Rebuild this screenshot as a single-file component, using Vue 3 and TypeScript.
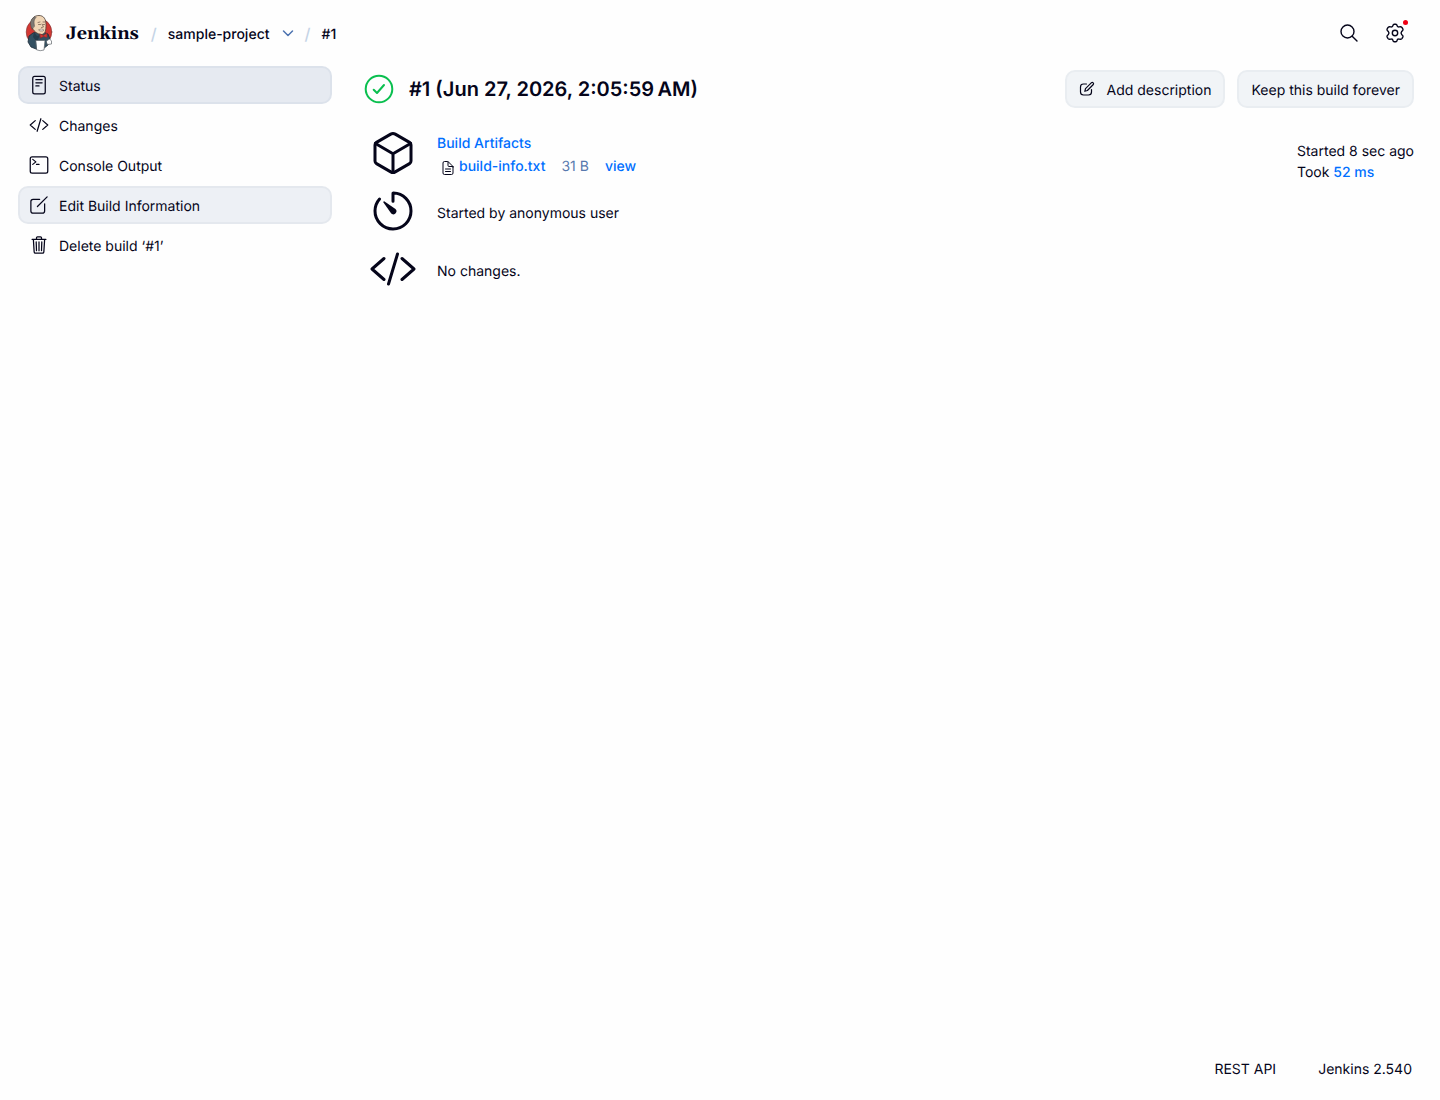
<script setup lang="ts">
interface Task {
  label: string
  icon: string
  state?: 'active' | 'hover'
}

const tasks: Task[] = [
  { label: 'Status', icon: 'status', state: 'active' },
  { label: 'Changes', icon: 'code' },
  { label: 'Console Output', icon: 'terminal' },
  { label: 'Edit Build Information', icon: 'edit', state: 'hover' },
  { label: 'Delete build ‘#1’', icon: 'trash' },
]

const icons: Record<string, string[]> = {
  status: [
    'M144 32h224a48 48 0 0148 48v352a48 48 0 01-48 48H144a48 48 0 01-48-48V80a48 48 0 0148-48z',
    'M176 120h160M176 200h160M176 280h80',
  ],
  code: ['M160 368L32 256l128-112M352 368l128-112-128-112M304 96l-96 320'],
  terminal: [
    'M80 48h352a48 48 0 0148 48v320a48 48 0 01-48 48H80a48 48 0 01-48-48V96a48 48 0 0148-48z',
    'M96 112l80 64-80 64M192 240h64',
  ],
  edit: [
    'M400 224v184a56 56 0 01-56 56H104a56 56 0 01-56-56V168a56 56 0 0156-56h167',
    'M216 296L464 48',
  ],
  trash: [
    'M112 112l20 320c.95 18.49 14.4 32 32 32h184c17.67 0 30.87-13.51 32-32l20-320M80 112h352',
    'M192 112V72a24 24 0 0124-24h80a24 24 0 0124 24v40M256 176v224M184 176l8 224M328 176l-8 224',
  ],
}
</script>

<template>
  <div class="page">
    <header class="header">
      <a class="brand" href="#">
        <svg class="logo" viewBox="0 0 28 38" aria-hidden="true">
          <ellipse cx="14" cy="18" rx="12.800" ry="13.500" fill="#d33833" stroke="#7a3230" stroke-width=".6" />
          <path d="M8 19l-4 3-1 6 3 5 5 2h7l5-4 2-6-2-5-5-2z" fill="#335061" stroke="#1d2c38" stroke-width=".8" />
          <path d="M6.500 12C5 5 9 1.500 14 1.500c5 0 7 4 7 9 0 6-.5 9-4 10-5 0-9-4-10.500-8z" fill="#f0d6b7" stroke="#4b3d35" stroke-width=".8" />
          <path d="M7 15C4.500 10 5 5 10 2.500l1 1C8.500 6 9 9 9.500 12z" fill="#7d7974" stroke="#4b4541" stroke-width=".5" />
          <path d="M13 8.500l2-.5M18 8h2M13.500 10.500h2M18 10.500h1.500M17 10l1.500 3-2 .5" fill="none" stroke="#6b5548" stroke-width=".7" />
          <path d="M14 15.500q3-1.500 5 .5l-1 1h-3z" fill="#e9e3dc" stroke="#6b5548" stroke-width=".5" />
          <path d="M9 18l3 4 3-1-3 7-4-5z" fill="#263c4b" />
          <path d="M15 20l3.500 1.500L22 19v4.500l-3.500-1L15.500 24z" fill="#d33833" stroke="#8d2425" stroke-width=".6" />
          <path d="M11 26.500h9L19 36q-4 1.500-7 0z" fill="#fff" stroke="#60656b" stroke-width=".7" />
          <path d="M21.500 27l3-2 2 2v3l-4 .5z" fill="#fff" stroke="#60656b" stroke-width=".7" />
        </svg>
        <span>Jenkins</span>
      </a>
      <nav class="crumbs" aria-label="Breadcrumb">
        <span class="slash">/</span>
        <a href="#">sample-project</a>
        <button class="chevron" type="button" aria-label="Project menu">
          <svg viewBox="0 0 12 12"><path d="M1.500 4L6 8.500 10.500 4" /></svg>
        </button>
        <span class="slash">/</span>
        <a href="#">#1</a>
      </nav>
      <div class="tools">
        <button type="button" aria-label="Search">
          <svg class="icon tool" viewBox="0 0 20 20">
            <circle cx="8.500" cy="8.500" r="6.500" /><path d="M13.200 13.200L18 18" />
          </svg>
        </button>
        <button type="button" aria-label="Manage">
          <svg class="icon tool" viewBox="0 0 20 20">
            <path d="M8 2.400Q8.200 1.300 9.200 1.300H10.800Q11.800 1.300 12 2.400Q12.300 4.100 13.800 3.900L15.700 3.800Q16.600 3.900 17.100 4.700L17.900 6.100Q18.300 7 17.500 7.700L16.600 8.600Q15.500 10 16.600 11.400L17.500 12.300Q18.300 13 17.900 13.900L17.100 15.300Q16.600 16.100 15.700 16.200L13.800 16.100Q12.300 15.900 12 17.600Q11.800 18.700 10.800 18.700H9.200Q8.200 18.700 8 17.600Q7.700 15.900 6.200 16.100L4.300 16.200Q3.400 16.100 2.900 15.300L2.100 13.900Q1.700 13 2.500 12.300L3.400 11.400Q4.500 10 3.400 8.600L2.500 7.700Q1.700 7 2.100 6.100L2.900 4.700Q3.400 3.900 4.300 3.800L6.200 3.900Q7.700 4.100 8 2.400z" />
            <circle cx="10" cy="10" r="2.700" />
          </svg>
          <span class="dot"></span>
        </button>
      </div>
    </header>

    <div class="body">
      <nav class="side" aria-label="Build">
        <a v-for="task in tasks" :key="task.label" href="#" class="task" :class="task.state">
          <svg class="icon" viewBox="0 0 512 512">
            <path v-for="d in icons[task.icon]" :key="d" :d="d" />
          </svg>
          <span>{{ task.label }}</span>
        </a>
      </nav>

      <main class="main">
        <div class="bar">
          <svg class="ok" viewBox="0 0 30 30" aria-label="Success">
            <circle cx="15" cy="15" r="13.300" /><path d="M9.700 15.700l3.300 3.300 7-8" />
          </svg>
          <h1>#1 (Jun 27, 2026, 2:05:59&#8239;AM)</h1>
          <div class="actions">
            <button class="btn" type="button">
              <svg class="pen" viewBox="0 0 16 16">
                <path d="M7.500 3H4.500Q1.500 3 1.500 6v5q0 3 3 3h5q3 0 3-3V8.500" />
                <path d="M5.800 10.300L6.500 7.700 12.500 1.700Q13.400 1 14.200 1.800T14.300 3.500L8.400 9.500z" />
              </svg>
              Add description
            </button>
            <button class="btn" type="button">Keep this build forever</button>
          </div>
        </div>

        <div class="content">
          <div class="rows">
            <section class="row">
              <svg class="icon big" viewBox="0 0 512 512">
                <path d="M448 341.370V170.610A32 32 0 00432.110 143l-152-88.460a47.940 47.940 0 00-48.240 0L79.890 143A32 32 0 0064 170.610v170.760A32 32 0 0079.890 369l152 88.460a48 48 0 0048.240 0l152-88.460A32 32 0 00448 341.370z" />
                <path d="M69 154l187 110 187-110M256 464V264" />
              </svg>
              <div class="artifacts">
                <a href="#">Build Artifacts</a>
                <div class="file">
                  <svg class="icon doc" viewBox="0 0 512 512">
                    <path d="M416 221.250V416a48 48 0 01-48 48H144a48 48 0 01-48-48V96a48 48 0 0148-48h98.750a32 32 0 0122.620 9.370l141.260 141.260a32 32 0 019.370 22.620z" />
                    <path d="M256 56v120a32 32 0 0032 32h120M176 288h160M176 368h160" />
                  </svg>
                  <a href="#">build-info.txt</a>
                  <span class="size">31 B</span>
                  <a href="#">view</a>
                </div>
              </div>
            </section>
            <section class="row">
              <svg class="icon big" viewBox="0 0 512 512">
                <path d="M112.910 128A191.850 191.850 0 0064 254c-1.180 106.350 85.650 193.800 192 194 106.200.200 192-85.830 192-192 0-104.540-83.550-189.610-187.500-192a4.360 4.360 0 00-4.500 4.370V152" />
                <path class="hand" d="M233.380 278.630l-79-113a8.130 8.130 0 0111.320-11.320l113 79a32.500 32.500 0 01-37.250 53.260 33.210 33.210 0 01-8.070-7.940z" />
              </svg>
              <p>Started by anonymous user</p>
            </section>
            <section class="row">
              <svg class="icon big" viewBox="0 0 512 512"><path :d="icons.code[0]" /></svg>
              <p>No changes.</p>
            </section>
          </div>
          <aside class="timing">
            <div>Started 8 sec ago</div>
            <div>Took <a href="#">52 ms</a></div>
          </aside>
        </div>
      </main>
    </div>

    <footer class="footer">
      <a href="#">REST API</a>
      <button type="button">Jenkins 2.540</button>
    </footer>
  </div>
</template>

<style>
body {
  margin: 0;
  background: #fefefe;
}
</style>

<style scoped>
.page {
  display: flex;
  flex-direction: column;
  min-height: 100vh;
  box-sizing: border-box;
  font: 14px/21px Inter, 'Liberation Sans', sans-serif;
  text-rendering: geometricPrecision;
  color: #05051a;
}
a {
  color: inherit;
  text-decoration: none;
}
button {
  font: inherit;
  color: inherit;
  text-rendering: inherit;
  background: none;
  border: 0;
  padding: 0;
}
svg {
  display: block;
  flex: none;
  fill: none;
  stroke-linecap: round;
  stroke-linejoin: round;
}
.icon {
  width: 20px;
  height: 20px;
  stroke: currentColor;
  stroke-width: 32;
}
.header {
  display: flex;
  align-items: center;
  height: 66px;
  padding: 0 35px 0 25px;
}
.brand {
  display: flex;
  align-items: center;
  gap: 13px;
  font: bold 18px/24px Gelasio, Georgia, 'Liberation Serif', serif;
}
.brand span {
  padding-top: 3px;
}
.logo {
  width: 28px;
  height: 38px;
}
.crumbs {
  display: flex;
  align-items: center;
  margin-left: 12px;
  padding-top: 2px;
  font-weight: 500;
}
.slash {
  width: 5px;
  margin-right: 12px;
  font-size: 16px;
  color: #c5d4e6;
}
.chevron {
  margin: 0 10px 2px 13px;
}
.chevron svg {
  width: 12px;
  height: 12px;
  stroke: #4d73b0;
  stroke-width: 1.5;
}
.tools {
  display: flex;
  gap: 26px;
  margin-left: auto;
}
.tools button {
  position: relative;
}
.tool {
  stroke-width: 1.4;
}
.dot {
  position: absolute;
  top: -3px;
  right: -3px;
  width: 5px;
  height: 5px;
  border-radius: 50%;
  background: #f00014;
}
.body {
  display: flex;
  flex: 1;
  gap: 32px;
  padding: 0 26px 0 18px;
}
.side {
  display: flex;
  flex-direction: column;
  gap: 2px;
  width: 314px;
  flex: none;
}
.task {
  display: flex;
  align-items: center;
  gap: 10px;
  height: 34px;
  padding: 0 9px;
  border: 2px solid transparent;
  border-radius: 10px;
}
.task span {
  padding-top: 2px;
}
.task.active {
  background: #e6eaf1;
  border-color: #dce2eb;
}
.task.hover {
  background: #edf0f5;
  border-color: #e4e8ee;
}
.main {
  flex: 1;
  min-width: 0;
}
.bar {
  display: flex;
  align-items: center;
  height: 38px;
  padding-top: 4px;
}
.ok {
  width: 30px;
  height: 30px;
  stroke: #0abf4f;
  stroke-width: 2;
}
h1 {
  margin: 0 0 0 15px;
  font-size: 20px;
  line-height: 30px;
  font-weight: 600;
}
.actions {
  display: flex;
  gap: 12px;
  margin-left: auto;
}
.btn {
  display: flex;
  align-items: center;
  gap: 12px;
  height: 38px;
  padding: 2px 12px 0;
  background: #f1f4f7;
  border: 2px solid #e9edf1;
  border-radius: 10px;
}
.pen {
  width: 16px;
  height: 16px;
  margin-bottom: 2px;
  stroke: currentColor;
  stroke-width: 1.2;
}
.content {
  display: flex;
  justify-content: space-between;
  padding-top: 21px;
}
.rows {
  display: flex;
  flex-direction: column;
  gap: 10px;
  padding-left: 5px;
}
.row {
  display: flex;
  gap: 20px;
  min-height: 48px;
}
.row p {
  margin: 16px 0 0;
}
.big {
  width: 48px;
  height: 48px;
}
.hand {
  fill: currentColor;
  stroke: none;
}
.artifacts {
  padding-top: 4px;
}
.artifacts a,
.timing a {
  font-weight: 500;
  color: #006fff;
}
.file {
  display: flex;
  align-items: center;
  gap: 16px;
  padding: 2px 0 0 3px;
}
.doc {
  width: 16px;
  height: 16px;
  margin: 2px -13px 0 0;
}
.size {
  color: #5779ae;
}
.timing {
  padding-top: 12px;
}
.footer {
  display: flex;
  justify-content: flex-end;
  gap: 42px;
  padding: 0 28px 20px;
}
</style>
